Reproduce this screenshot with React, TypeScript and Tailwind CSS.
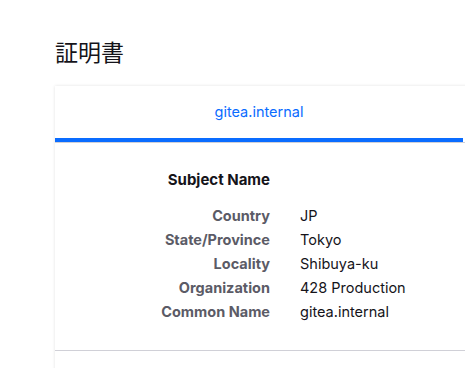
export default function App() {
  const rows = [
    ["Country", "JP"],
    ["State/Province", "Tokyo"],
    ["Locality", "Shibuya-ku"],
    ["Organization", "428 Production"],
    ["Common Name", "gitea.internal"],
  ];

  return (
    <div
      className="h-[368px] w-[465px] overflow-hidden bg-white pl-[55px] text-[#15141a]"
      style={{ fontFamily: "Inter, 'Noto Sans', 'Noto Sans CJK JP', sans-serif" }}
    >
      <h1 className="pt-[36px] text-[23px] leading-[30px] text-[#15141a]" style={{ fontFamily: "'Noto Sans CJK JP', sans-serif" }}>
        証明書
      </h1>

      <div className="mt-[20px] h-[400px] w-[440px] bg-white shadow-[0_0_3px_rgba(0,0,0,0.12)]">
        <div className="flex border-b border-[#d0d0d7]">
          <div className="flex h-[56px] w-[408px] flex-col">
            <div className="flex flex-1 items-center justify-center text-[14.5px] text-[#0a6cff]">
              gitea.internal
            </div>
            <div className="h-[4px] bg-[#0a6cff]" />
          </div>
        </div>

        <div className="border-b border-[#d0d0d7] pb-[26px] pt-[25px]">
          <div className="grid grid-cols-[215px_1fr] gap-x-[30px] text-[14.5px] leading-[24px]">
            <div className="pb-[12px] text-right font-bold text-[15px]">Subject Name</div>
            <div />
            {rows.map(([k, v]) => (
              <div key={k} className="contents">
                <div className="text-right font-bold text-[#5b5b66]">{k}</div>
                <div>{v}</div>
              </div>
            ))}
          </div>
        </div>
      </div>
    </div>
  );
}
